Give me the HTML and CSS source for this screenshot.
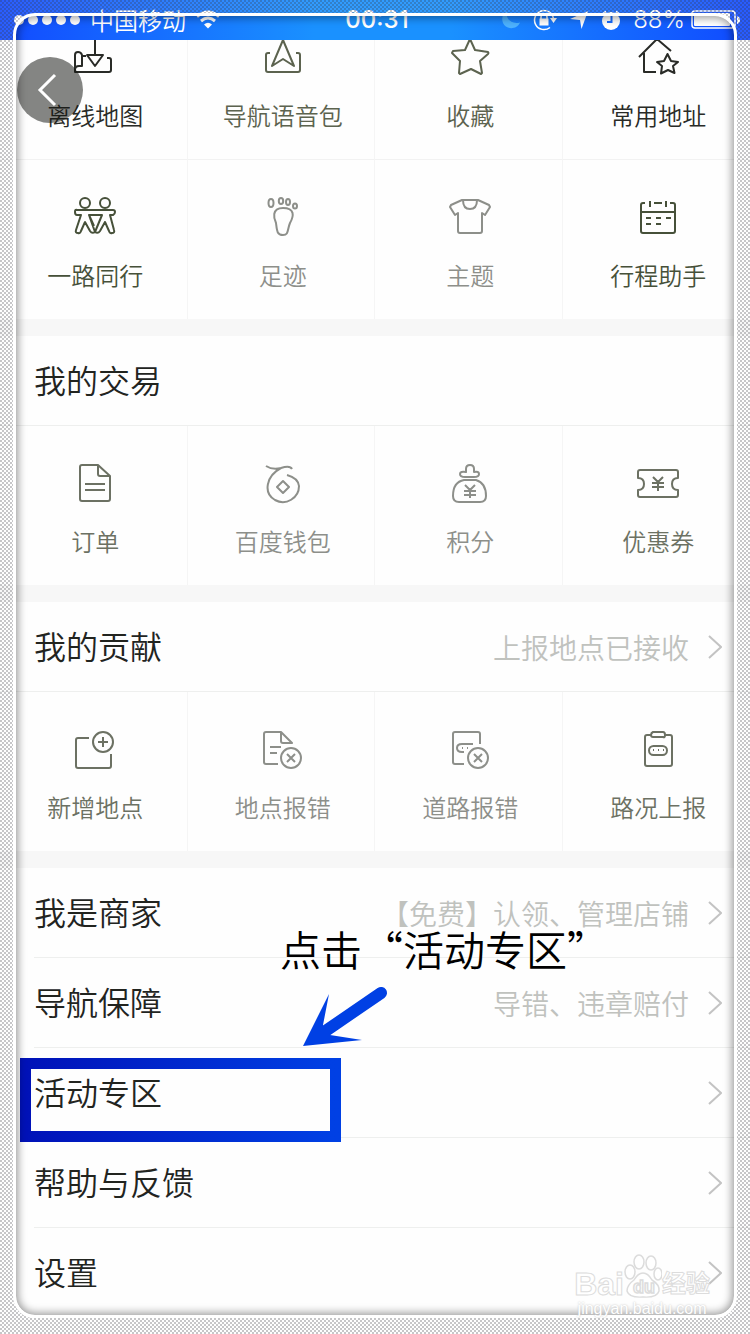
FILE: index.html
```html
<!DOCTYPE html>
<html lang="zh-CN">
<head>
<meta charset="utf-8">
<meta name="viewport" content="width=device-width, initial-scale=1">
<title>我的</title>
<link rel="stylesheet" href="styles.css">
</head>
<body>
<div class="screen">
  <header class="status">
    <div class="status-left">
      <svg class="dots" width="66" height="12" viewBox="0 0 66 12" fill="#fff"><circle cx="5" cy="6" r="5"/><circle cx="19" cy="6" r="5"/><circle cx="33" cy="6" r="5"/><circle cx="47" cy="6" r="5"/><circle cx="61" cy="6" r="5"/></svg>
      <span class="carrier">中国移动</span>
      <svg width="24" height="20" viewBox="0 0 24 20" fill="none" stroke="#fff" stroke-width="3"><path d="M1 6.500Q12-2.500 23 6.500M5 11Q12 5 19 11"/><path d="M8 14.500Q12 11 16 14.500L12 18.500Z" fill="#fff" stroke="none"/></svg>
    </div>
    <time class="clock">00:31</time>
    <div class="status-right">
      <svg width="20" height="20" viewBox="0 0 20 20"><path d="M6 1C4 8 10 15 19 12.500C16 20 5 20 2 13C0 8 2 3 6 1Z" fill="#4db2ff"/></svg>
      <svg width="24" height="22" viewBox="0 0 24 22" fill="none" stroke="#fff" stroke-width="1.500"><path d="M17 18.500A9.500 9.500 0 1 1 20.500 10"/><path d="M17 9H24L20.500 14Z" fill="#fff" stroke="none"/><rect x="6.500" y="9.500" width="9" height="7" fill="#fff" stroke="none"/><path d="M8 10V8A3 3 0 0 1 14 8V10"/></svg>
      <svg width="20" height="20" viewBox="0 0 20 20" fill="#fff"><path d="M19 1L12.500 19L11 10L1 9Z"/></svg>
      <svg width="20" height="20" viewBox="0 0 20 20"><circle cx="10" cy="11" r="9" fill="#fff"/><path d="M2 4L5 1.500M15 1.500L18 4" stroke="#fff" stroke-width="2"/><path d="M10.500 6V12H6" fill="none" stroke="#176cff" stroke-width="2"/></svg>
      <span class="percent">88%</span>
      <svg width="49" height="20" viewBox="0 0 49 20"><rect x="1" y="1" width="43" height="17" rx="3" fill="none" stroke="#fff" stroke-width="1.500"/><rect x="3" y="3" width="36" height="13" rx="1" fill="#fff"/><path d="M46 6Q49 7 49 10T46 14Z" fill="#fff"/></svg>
    </div>
  </header>

  <main>
    <nav class="grid">
      <a class="cell ink" href="#"><svg class="icon" viewBox="0 0 44 44"><path d="M22 2V20M14 20H30L22 31ZM13 21H10M34 23H36Q38 23 38 25V35Q38 37 36 37H2V20Q2 17 5 17T9 20V31H6Q2 31 2 35"/></svg><span>离线地图</span></a>
      <a class="cell olive" href="#"><svg class="icon" viewBox="0 0 44 44"><path d="M22 5L33 31L22 24L11 31ZM9 18H7Q5 18 5 20V35Q5 37 7 37H37Q39 37 39 35V20Q39 18 37 18H35"/></svg><span>导航语音包</span></a>
      <a class="cell olive" href="#"><svg class="icon" viewBox="0 0 44 44"><path d="M22 4L27 15L40 17Q41 18 40 19L32 26L34 38L33 39L23 34L12 39L11 38L12 26L4 18L5 16L17 15Z"/></svg><span>收藏</span></a>
      <a class="cell ink" href="#"><svg class="icon" viewBox="0 0 44 44"><path d="M3 22L21 4L35 16M8 18V37H20M31.500 19L35 26L42 27L37 31L38.500 38L32 35L25 38.500L26 31L21 27L28 26Z"/></svg><span>常用地址</span></a>

      <a class="cell moss" href="#"><svg class="icon" viewBox="0 0 44 44"><circle cx="12" cy="8" r="5"/><circle cx="32" cy="8" r="5"/><path d="M4 15H40Q42 15 42 17T40 20H37L41 35Q42 38 39 38Q37 39 36 36L32 27L27 36Q25 39 22 37Q19 39 17 36L12 27L8 36Q7 39 5 38Q2 38 3 35L8 20H4Q2 20 2 17T4 15ZM16 20H29L22 37ZM16 20L21 31"/></svg><span>一路同行</span></a>
      <a class="cell pale" href="#"><svg class="icon" viewBox="0 0 44 44"><ellipse cx="10" cy="8" rx="2.500" ry="4"/><ellipse cx="20" cy="6" rx="2.200" ry="3"/><ellipse cx="27" cy="7" rx="2" ry="3"/><ellipse cx="34" cy="11" rx="2" ry="2.500"/><path d="M22 13C10 13 13 24 15 28C16 36 16 40 22 40C28 40 26 35 29 28C33 21 34 13 22 13Z"/></svg><span>足迹</span></a>
      <a class="cell pale" href="#"><svg class="icon" viewBox="0 0 44 44"><path d="M14 5H30L41 10L42 12L37 20L34 18V36Q34 38 32 38H12Q10 38 10 36V18L7 20L2 12L3 10ZM15 5Q15 14 22 14T29 5"/></svg><span>主题</span></a>
      <a class="cell moss" href="#"><svg class="icon" viewBox="0 0 44 44"><path d="M9 8H7Q5 8 5 10V36Q5 38 7 38H37Q39 38 39 36V10Q39 8 37 8H34M14 6V12M18 8H26M30 6V12M5 17H39M10 23H15M20 23H25M30 23H35M10 29H15M20 29H25"/></svg><span>行程助手</span></a>
    </nav>

    <section>
      <h2 class="row head">我的交易</h2>
      <nav class="grid">
        <a class="cell gray" href="#"><svg class="icon" viewBox="0 0 44 44"><path d="M9 4H25L37 15V38Q37 40 35 40H9Q7 40 7 38V6Q7 4 9 4M25 4V13Q25 15 27 15H37M12 23H32M12 29H32"/></svg><span>订单</span></a>
        <a class="cell pale" href="#"><svg class="icon" viewBox="0 0 44 44"><path d="M5 5Q11 9 20 7Q29 4 31 8M20 7C5 15 2 32 14 39C25 45 38 37 38 25Q37 17 26 14M16 26L22 20L28 26L22 32Z"/></svg><span>百度钱包</span></a>
        <a class="cell pale" href="#"><svg class="icon" viewBox="0 0 44 44"><path d="M18 11V8Q18 4 22 4T26 8V11Q31 10 31 13Q31 16 26 16H17Q12 16 12 13T18 11ZM16 19H28Q38 22 38 35Q38 41 32 41H11Q5 41 5 35Q5 21 16 19ZM17 24L22 29L27 24M22 29V37M16 30H28M16 34H28"/></svg><span>积分</span></a>
        <a class="cell gray" href="#"><svg class="icon" viewBox="0 0 44 44"><path d="M4 9H40Q42 9 42 11V17Q36 17 36 23T42 29V34Q42 36 40 36H4Q2 36 2 34V29Q8 29 8 23T2 17V11Q2 9 4 9ZM17 16L22 21L27 16M22 21V30M16 22H28M16 26H28"/></svg><span>优惠券</span></a>
      </nav>
    </section>

    <section>
      <h2 class="row head">我的贡献<a class="more" href="#">上报地点已接收<svg class="chev" viewBox="0 0 14 24"><path d="M1 1L13 12L1 23"/></svg></a></h2>
      <nav class="grid">
        <a class="cell gray" href="#"><svg class="icon" viewBox="0 0 44 44"><path d="M16 11H5Q3 11 3 13V39Q3 41 5 41H36Q38 41 38 39V27M30 10V20M25 15H35"/><circle cx="30" cy="15" r="10"/></svg><span>新增地点</span></a>
        <a class="cell pale" href="#"><svg class="icon" viewBox="0 0 44 44"><path d="M17 37H5Q3 37 3 35V7Q3 5 5 5H20L31 16H22Q20 16 20 14V5M9 20H20M9 26H16M26 27L34 35M34 27L26 35"/><circle cx="30" cy="31" r="10"/></svg><span>地点报错</span></a>
        <a class="cell pale" href="#"><svg class="icon" viewBox="0 0 44 44"><path d="M16 37H7Q5 37 5 35V7Q5 5 7 5H30Q32 5 32 7V17M25 17H14Q9 17 9 21T14 25H16M26 27L34 35M34 27L26 35M14 21H15M19 21H20"/><circle cx="30" cy="31" r="10"/></svg><span>道路报错</span></a>
        <a class="cell gray" href="#"><svg class="icon" viewBox="0 0 44 44"><path d="M15 8H11Q9 8 9 10V37Q9 39 11 39H34Q36 39 36 37V10Q36 8 34 8H29M17 5H27Q29 5 29 8T27 10H17Q15 10 15 8T17 5ZM17 23H18M22 23H23M27 23H28"/><rect x="13" y="19" width="18" height="9" rx="4.500"/></svg><span>路况上报</span></a>
      </nav>
    </section>

    <nav class="list">
      <a class="row" href="#">我是商家<span class="more">【免费】认领、管理店铺<svg class="chev" viewBox="0 0 14 24"><path d="M1 1L13 12L1 23"/></svg></span></a>
      <a class="row" href="#">导航保障<span class="more">导错、违章赔付<svg class="chev" viewBox="0 0 14 24"><path d="M1 1L13 12L1 23"/></svg></span></a>
      <a class="row marked" href="#">活动专区<span class="more"><svg class="chev" viewBox="0 0 14 24"><path d="M1 1L13 12L1 23"/></svg></span>
        <span class="note">点击“活动专区”</span>
        <svg class="arrow" viewBox="0 0 86 62"><path d="M78 7L24 44" stroke="#0040e4" stroke-width="12" stroke-linecap="round"/><path d="M0 60L26 8L20 39L27 49L59 54Z" fill="#0040e4"/></svg>
        <span class="highlight"></span></a>
      <a class="row" href="#">帮助与反馈<span class="more"><svg class="chev" viewBox="0 0 14 24"><path d="M1 1L13 12L1 23"/></svg></span></a>
      <a class="row" href="#">设置<span class="more"><svg class="chev" viewBox="0 0 14 24"><path d="M1 1L13 12L1 23"/></svg></span></a>
    </nav>
  </main>

  <button class="back" aria-label="返回"><svg width="20" height="34" viewBox="0 0 20 34" fill="none" stroke="#fff" stroke-width="3"><path d="M18 2L3 17L18 32"/></svg></button>

  <svg class="surround" aria-hidden="true">
    <defs>
      <pattern id="check" width="4" height="4" patternUnits="userSpaceOnUse"><rect width="4" height="4" fill="#fff" fill-opacity=".1"/><path d="M0 0H2V2H0ZM2 2H4V4H2Z" fill="#34343e" fill-opacity=".28"/></pattern>
      <mask id="outside"><rect width="100%" height="100%" fill="#fff"/><rect class="hole" x="14" y="14" rx="20" fill="#000"/></mask>
    </defs>
    <rect width="100%" height="100%" fill="url(#check)" mask="url(#outside)"/>
  </svg>
  <div class="frame"></div>

  <div class="watermark">
    <div class="brand"><span>Bai</span>
      <svg width="38" height="46" viewBox="0 0 38 46" fill="#fff" stroke="#dcdcdc" stroke-width="1.500"><ellipse cx="6" cy="18" rx="5" ry="7"/><ellipse cx="15" cy="8" rx="5" ry="7"/><ellipse cx="27" cy="9" rx="5" ry="7"/><ellipse cx="34" cy="20" rx="4" ry="6"/><path d="M19 19Q24 19 28 26Q36 31 35 37Q33 44 19 43Q5 44 3 37Q3 31 10 26Q14 19 19 19Z"/><text x="9" y="39" class="du">du</text></svg>
      <span class="cn">经验</span></div>
    <div class="site">jingyan.baidu.com</div>
  </div>
</div>
</body>
</html>
```
FILE: styles.css
```css
* { box-sizing: border-box; }

body {
  margin: 0;
  background: #fefefe;
  color: #22241f;
  font-family: "Noto Sans CJK SC", sans-serif;
  font-weight: 350;
}

a { color: inherit; text-decoration: none; }

.screen {
  position: relative;
  min-height: 100vh;
  overflow: hidden;
}

/* status bar lies over the scrolled content */
.status {
  position: absolute;
  z-index: 1;
  top: 0;
  left: 0;
  right: 0;
  height: 40px;
  padding: 0 10px 0 14px;
  display: grid;
  grid-template-columns: 1fr auto 1fr;
  align-items: center;
  color: #fff;
  background: linear-gradient(90deg, #124bff 0%, #1a91ff 42%, #1a91ff 60%, #1049ff 100%);
}
.status-left { display: flex; align-items: center; gap: 10px; }
.status-right { display: flex; align-items: center; justify-content: flex-end; gap: 12px; }
.status-right svg:last-child { margin-left: -6px; }
.carrier { font-size: 24px; line-height: 36px; }
.clock { font: 500 24px/36px Inter, sans-serif; }
.percent { font: 300 24px/36px Inter, sans-serif; }

.grid { display: grid; grid-template-columns: repeat(4, 1fr); }
.cell {
  display: flex;
  flex-direction: column;
  align-items: center;
  gap: 20px;
  padding: 35px 0 28px 4px;
  border-right: 1px solid #f5f5f5;
  font-size: 24px;
  line-height: 32px;
  white-space: nowrap;
}
.cell:nth-child(4n) { border-right: 0; }
.cell:nth-last-child(n+5) { border-bottom: 1px solid #f2f2f2; }
.icon {
  width: 44px;
  height: 44px;
  fill: none;
  stroke: currentColor;
  stroke-width: 2;
  stroke-linejoin: round;
}
.ink { color: #292b27; }
.moss { color: #465039; }
.olive { color: #5c634f; }
.gray { color: #6c7163; }
.pale { color: #8d8f8a; }

section, .list { border-top: 17px solid #f7f7f7; }

.row {
  position: relative;
  display: flex;
  align-items: center;
  justify-content: space-between;
  height: 90px;
  margin: 0 0 0 34px;
  padding: 0 28px 4px 0;
  border-bottom: 1px solid #eeefee;
  font-size: 32px;
  font-weight: inherit;
  line-height: 48px;
}
.row.head { margin-left: 0; padding-left: 34px; }
.row:last-child { border-bottom: 0; }
.more {
  display: flex;
  align-items: center;
  gap: 19px;
  padding-top: 4px;
  font-size: 28px;
  color: #c0c2be;
}
.chev {
  width: 14px;
  height: 24px;
  fill: none;
  stroke: #c3c3c3;
  stroke-width: 2;
}

/* annotation over the list */
.highlight {
  position: absolute;
  top: 10px;
  left: -14px;
  width: 321px;
  height: 84px;
  border: 11px solid;
  border-image: linear-gradient(90deg, #0012b8, #0040e4) 1;
}
.marked { z-index: 1; }
.note {
  position: absolute;
  top: -130px;
  left: 246px;
  font-size: 41px;
  line-height: 60px;
  color: #000;
  white-space: nowrap;
}
.arrow {
  position: absolute;
  top: -62px;
  left: 269px;
  width: 86px;
  height: 62px;
}

.back {
  position: absolute;
  z-index: 2;
  top: 57px;
  left: 17px;
  width: 66px;
  height: 66px;
  display: flex;
  align-items: center;
  justify-content: center;
  padding: 0 6px 0 0;
  border: 0;
  border-radius: 50%;
  background: rgba(20, 22, 18, 0.52);
}

.surround, .frame {
  position: absolute;
  z-index: 3;
  pointer-events: none;
}
.surround { inset: 0; width: 100%; height: 100%; }
.hole { width: calc(100% - 28px); height: calc(100% - 30px); }
.frame {
  inset: 13px 13px 16px;
  border: 3px solid #fff;
  border-radius: 22px;
  box-shadow: inset 0 0 9px 2px rgba(0, 0, 0, 0.4);
}

.watermark {
  position: absolute;
  z-index: 4;
  right: 40px;
  bottom: 16px;
  color: #fff;
  font-family: "Liberation Sans", "Noto Sans CJK SC", sans-serif;
  text-align: center;
  -webkit-text-stroke: 1px #dcdcdc;
}
.brand {
  display: flex;
  align-items: flex-end;
  justify-content: center;
  font-size: 32px;
  font-weight: 700;
  line-height: 32px;
}
.cn { font-size: 24px; }
.du { font-size: 18px; font-weight: 700; }
.site {
  font-size: 16px;
  line-height: 18px;
  -webkit-text-stroke: 0;
  text-shadow: 0 0 2px #bbb;
}
```
